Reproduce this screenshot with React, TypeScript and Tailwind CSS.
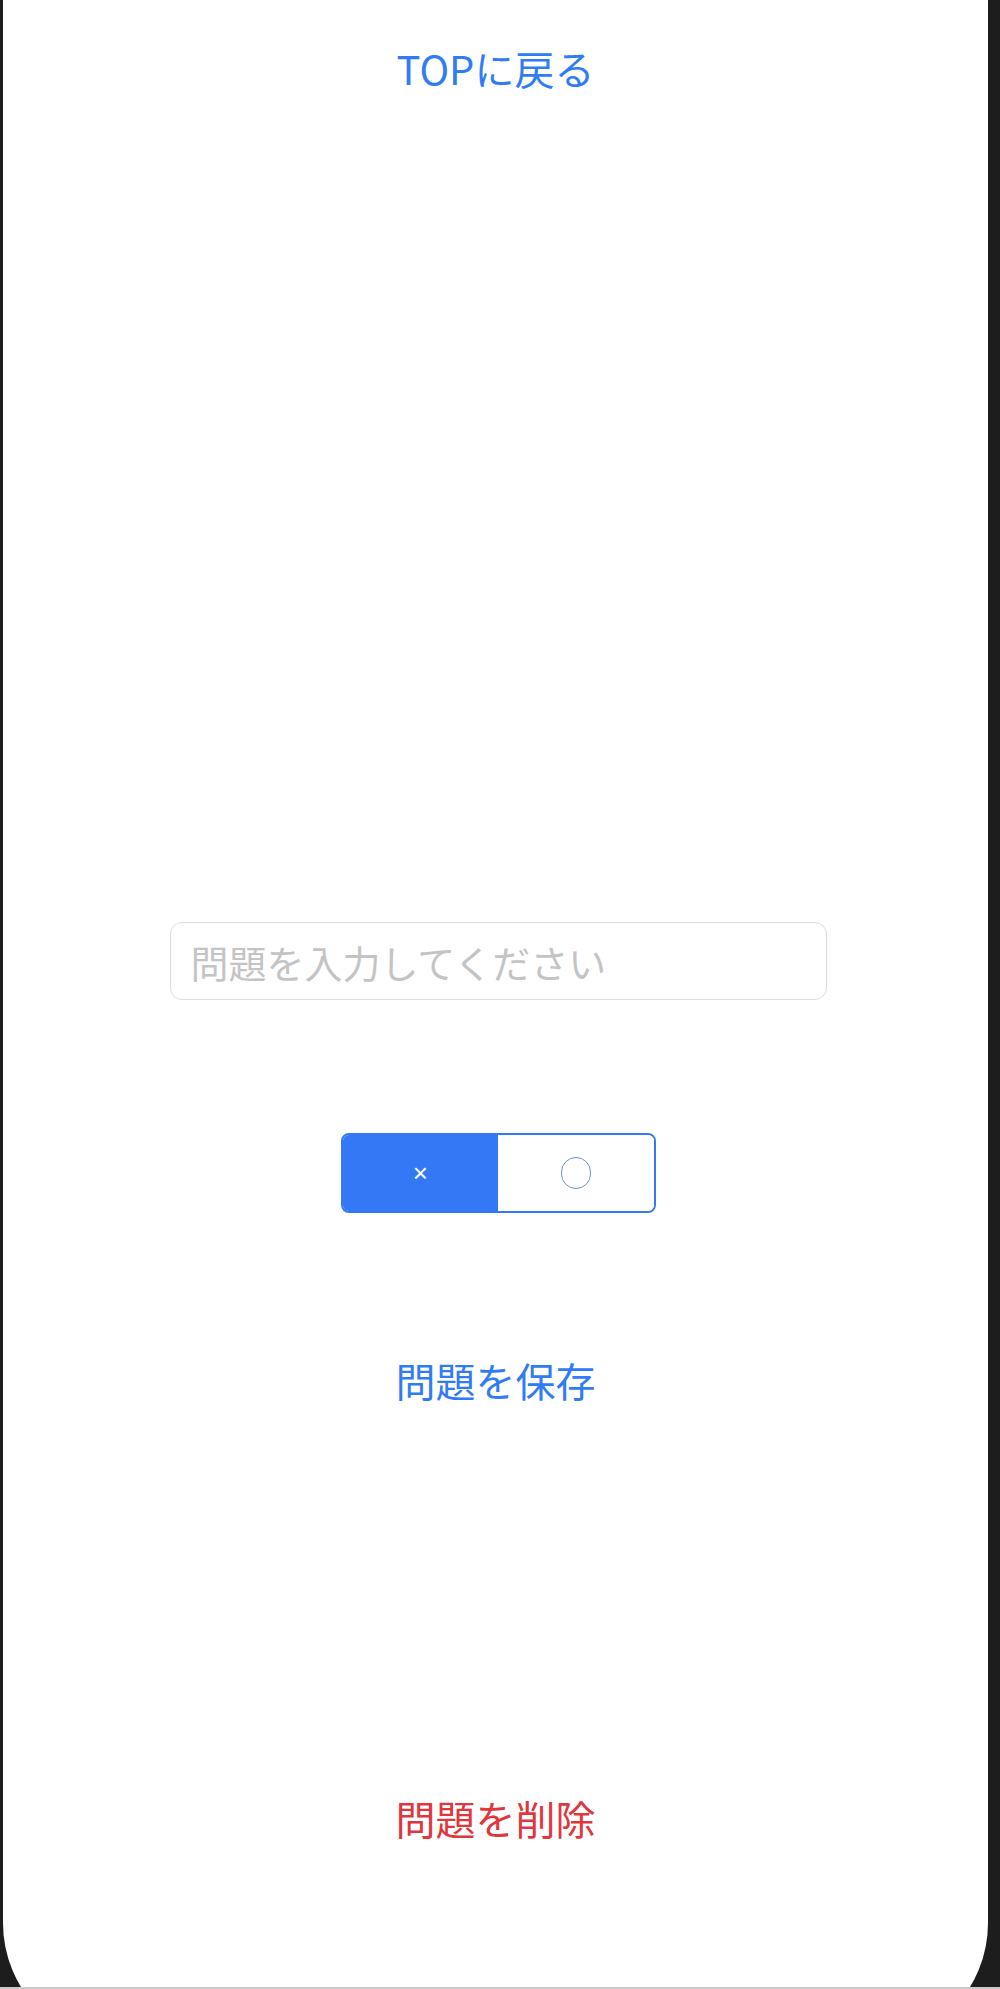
import { useState } from "react";

const jp = "font-['Noto_Sans_CJK_JP','Noto_Sans',sans-serif]";

export default function App() {
  const [question, setQuestion] = useState("");
  const [answer, setAnswer] = useState<"x" | "o">("x");

  return (
    <div className={`flex h-[1989px] flex-col bg-[#1d1d1d] ${jp}`}>
      {/* screen */}
      <div className="h-[1987px] overflow-hidden">
        <div className="ml-[3px] flex h-[2046px] w-[985px] flex-col items-center rounded-b-[123px] bg-white">
          {/* back link */}
          <a
            href="#"
            className="mt-[48px] block text-[40px] leading-[40px] text-[#2f7cf5] no-underline"
          >
            TOPに戻る
          </a>

          {/* question input */}
          <input
            type="text"
            value={question}
            onChange={(e) => setQuestion(e.target.value)}
            placeholder="問題を入力してください"
            className="mt-[834px] ml-[5px] h-[78px] w-[657px] rounded-[12px] border-[1.5px] border-[#dedede] px-[20px] text-[38px] text-[#222] outline-none placeholder:text-[#c4c4c4]"
          />

          {/* answer toggle */}
          <div className="mt-[133px] ml-[5px] flex h-[80px] w-[315px] overflow-hidden rounded-[8px] border-2 border-[#3478f6]">
            <button
              type="button"
              onClick={() => setAnswer("x")}
              className={`flex flex-1 items-center justify-center text-[26px] font-['Liberation_Sans',sans-serif] ${
                answer === "x" ? "bg-[#3478f6] text-white" : "bg-white text-[#3478f6]"
              }`}
            >
              ×
            </button>
            <button
              type="button"
              onClick={() => setAnswer("o")}
              className={`flex flex-1 items-center justify-center ${
                answer === "o" ? "bg-[#3478f6]" : "bg-white"
              }`}
            >
              <span
                className={`block h-[32px] w-[30px] rounded-full border-[1.5px] ${
                  answer === "o" ? "border-white" : "border-[#7391c8]"
                }`}
              />
            </button>
          </div>

          {/* save */}
          <button
            type="button"
            className="mt-[147px] text-[40px] leading-[40px] text-[#2f7cf5]"
          >
            問題を保存
          </button>

          {/* delete */}
          <button
            type="button"
            className="mt-[398px] text-[40px] leading-[40px] text-[#e0363c]"
          >
            問題を削除
          </button>
        </div>
      </div>
      <div className="h-[2px] bg-[#c9c9c9]" />
    </div>
  );
}
